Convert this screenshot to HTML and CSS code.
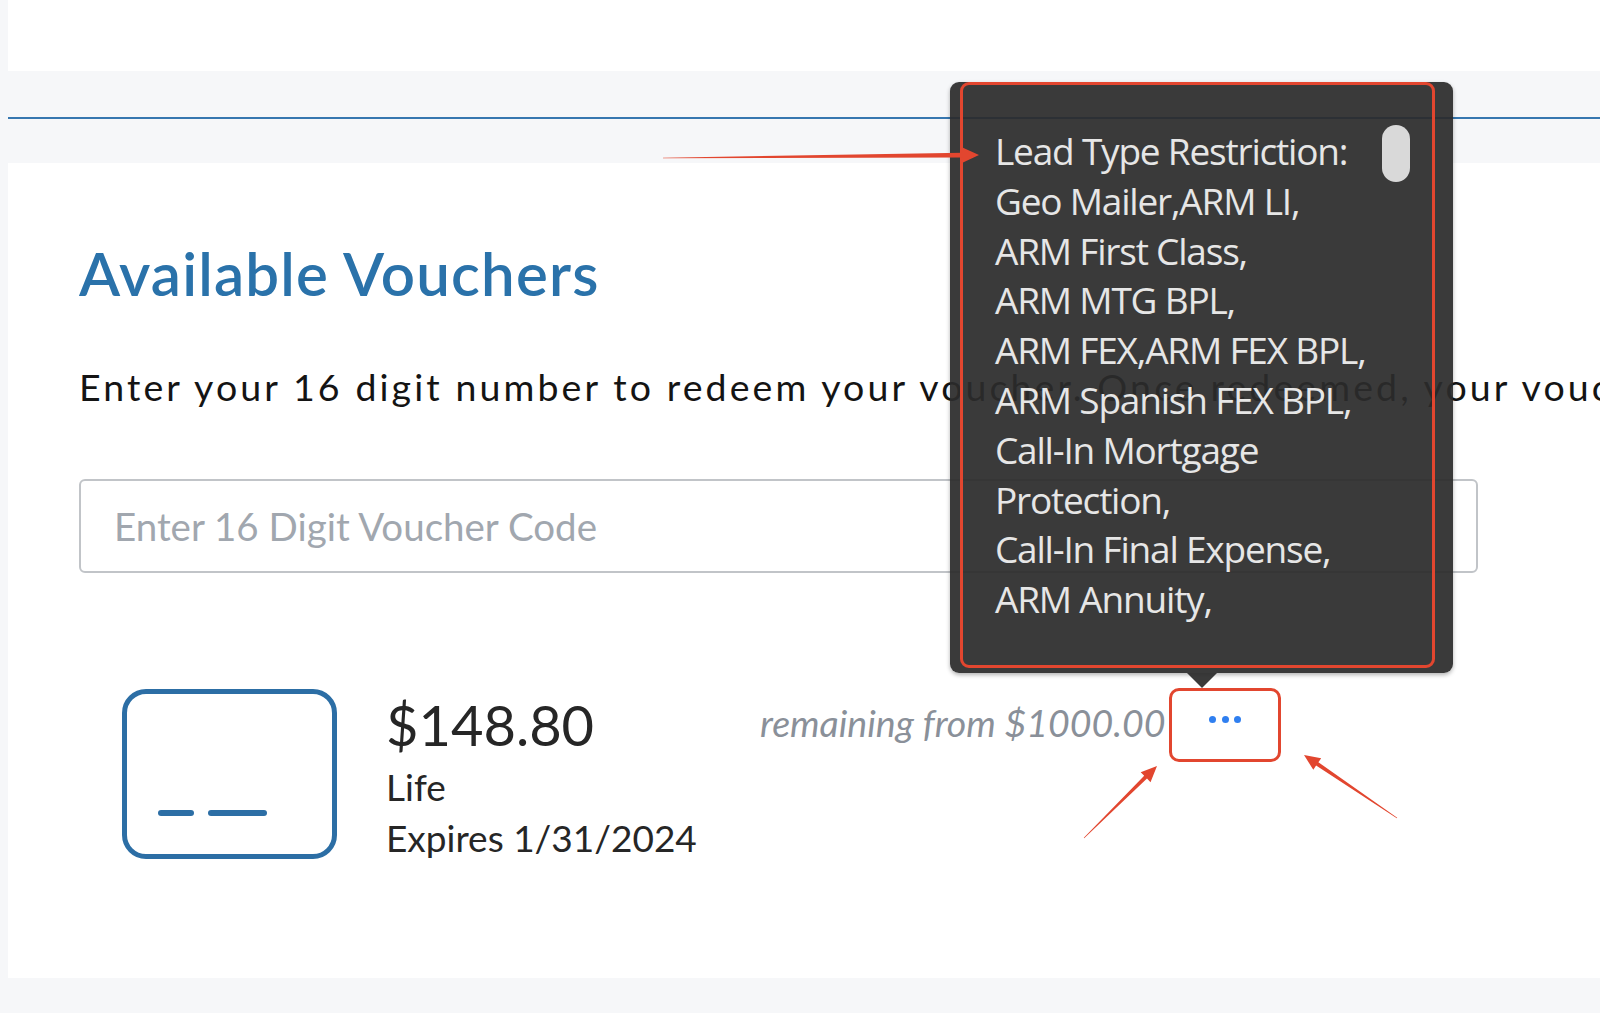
FILE: index.html
```html
<!DOCTYPE html>
<html lang="en">
<head>
<meta charset="utf-8">
<title>Available Vouchers</title>
<link rel="stylesheet" href="styles.css">
</head>
<body>
  <div class="topbar"></div>
  <div class="band"><div class="rule"></div></div>
  <main class="panel">
    <h1 class="title">Available Vouchers</h1>
    <p class="lead">Enter your 16 digit number to redeem your voucher. Once redeemed, your voucher will appear in the list below.</p>
    <input class="code" type="text" placeholder="Enter 16 Digit Voucher Code">
    <div class="voucher">
      <div class="vicon"><span class="dash short"></span><span class="dash long"></span></div>
      <div class="vinfo">
        <div class="amount">$148.80</div>
        <div class="type">Life</div>
        <div class="exp">Expires 1/31/2024</div>
      </div>
      <div class="remaining">remaining from $1000.00</div>
      <div class="more-wrap">
        <button class="more" type="button"><span class="dot"></span><span class="dot"></span><span class="dot"></span></button>
        <div class="tooltip">
          <div class="tip-line">Lead Type Restriction:</div>
          <div class="tip-line">Geo Mailer,ARM LI,</div>
          <div class="tip-line">ARM First Class,</div>
          <div class="tip-line">ARM MTG BPL,</div>
          <div class="tip-line">ARM FEX,ARM FEX BPL,</div>
          <div class="tip-line">ARM Spanish FEX BPL,</div>
          <div class="tip-line">Call-In Mortgage</div>
          <div class="tip-line">Protection,</div>
          <div class="tip-line">Call-In Final Expense,</div>
          <div class="tip-line">ARM Annuity,</div>
          <span class="thumb"></span>
          <span class="mark"></span>
        </div>
      </div>
    </div>
  </main>
  <svg class="notes" viewBox="0 0 1600 1013" width="1600" height="1013" aria-hidden="true">
    <polygon points="663,158.3 963,157.6 963,162.4 979,155 963,147.8 963,152.8 663,157.7"/>
    <polygon points="1084.2,838.2 1147,778.6 1150.5,782.2 1157,766 1140.7,772.2 1144.2,775.8 1083.8,837.8"/>
    <polygon points="1397.2,817.8 1318.4,762.3 1321.2,758.2 1304,755 1313.3,769.8 1316.1,765.6 1396.8,818.3"/>
  </svg>
</body>
</html>
```

FILE: styles.css
```css
html, body {
  margin: 0;
  padding: 0;
}

body {
  position: relative;
  width: 1600px;
  height: 1013px;
  overflow: hidden;
  background: #f6f7f9;
  font-family: Lato, "Liberation Sans", sans-serif;
}

.topbar {
  height: 71px;
  margin-left: 8px;
  background: #ffffff;
}

.band {
  height: 92px;
  margin-left: 8px;
  padding-top: 46px;
  box-sizing: border-box;
}

.rule {
  height: 2px;
  background: #3677b0;
}

.panel {
  margin-left: 8px;
  padding: 75px 0 115px 71px;
  background: #ffffff;
}

.title {
  margin: 0;
  font-size: 60px;
  line-height: 70px;
  font-weight: 600;
  letter-spacing: 1.2px;
  color: #2a72aa;
}

.lead {
  margin: 56px 0 0;
  font-size: 37.5px;
  line-height: 45px;
  letter-spacing: 3.1px;
  color: #141414;
  white-space: nowrap;
}

.code {
  display: block;
  margin-top: 70px;
  width: 1399px;
  height: 94px;
  box-sizing: border-box;
  border: 2px solid #c1c4c8;
  border-radius: 6px;
  padding: 0 0 0 33px;
  font-family: Lato, "Liberation Sans", sans-serif;
  font-size: 38.5px;
  color: #333;
  background: #fff;
  outline: none;
}

.code::placeholder {
  color: #a1a7af;
}

.voucher {
  display: flex;
  align-items: flex-start;
  margin-top: 116px;
  padding-left: 43px;
}

.vicon {
  flex: 0 0 auto;
  width: 215px;
  height: 170px;
  box-sizing: border-box;
  border: 5px solid #2c6ea5;
  border-radius: 24px;
  display: flex;
  align-items: flex-end;
  gap: 14px;
  padding: 0 0 38px 31px;
}

.dash {
  height: 6.5px;
  border-radius: 3.5px;
  background: #2c6ea5;
}

.dash.short { width: 36px; }
.dash.long { width: 59px; }

.vinfo {
  flex: 0 0 auto;
  width: 374px;
  margin-left: 49px;
  margin-top: 4px;
  color: #262626;
}

.amount {
  font-size: 56px;
  line-height: 64px;
}

.type,
.exp {
  font-size: 37px;
  line-height: 51px;
}

.type {
  margin-top: 4px;
}

.remaining {
  flex: 0 0 auto;
  width: 402px;
  margin-top: 14px;
  text-align: right;
  white-space: nowrap;
  font-size: 37.5px;
  line-height: 40px;
  font-style: italic;
  color: #8a9099;
}

.more-wrap {
  position: relative;
  margin-left: 7px;
  margin-top: -1px;
}

.more {
  display: flex;
  justify-content: center;
  align-items: flex-start;
  gap: 5.5px;
  width: 112px;
  height: 74px;
  box-sizing: border-box;
  padding: 25px 0 0 0;
  border: 3px solid #e2462f;
  border-radius: 10px;
  background: #fff;
  cursor: pointer;
}

.dot {
  width: 7px;
  height: 7px;
  border-radius: 50%;
  background: #2f7ff0;
}

.tooltip {
  position: absolute;
  left: -219px;
  top: -606px;
  width: 503px;
  height: 591px;
  box-sizing: border-box;
  padding: 44px 0 0 45px;
  border-radius: 9px;
  background: rgba(43, 43, 43, 0.93);
  box-shadow: 0 2px 4px rgba(0, 0, 0, 0.3);
  color: #e6e6e6;
  font-family: "Open Sans", "Noto Sans", sans-serif;
  font-size: 37px;
  line-height: 49.8px;
  letter-spacing: -1.2px;
  white-space: nowrap;
}

.tooltip::after {
  content: "";
  position: absolute;
  left: 237px;
  top: 100%;
  border-left: 15.5px solid transparent;
  border-right: 15.5px solid transparent;
  border-top: 15px solid rgba(43, 43, 43, 0.93);
}

.thumb {
  position: absolute;
  left: 432px;
  top: 43px;
  width: 28px;
  height: 57px;
  border-radius: 14px;
  background: #d9d9d9;
}

.mark {
  position: absolute;
  left: 10px;
  top: 0;
  width: 475px;
  height: 586px;
  box-sizing: border-box;
  border: 3px solid #e2462f;
  border-radius: 9px;
}

.notes {
  position: absolute;
  left: 0;
  top: 0;
  pointer-events: none;
  fill: #e2462f;
}
```
